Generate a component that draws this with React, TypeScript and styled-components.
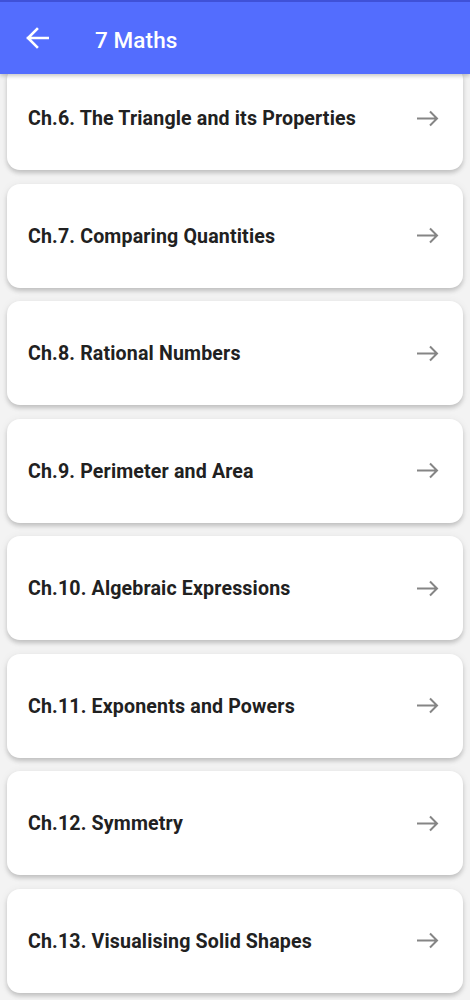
import React from 'react';
import styled, { createGlobalStyle } from 'styled-components';

const GlobalStyle = createGlobalStyle`
    html, body {
        margin: 0;
        padding: 0;
        background: #f3f3f3;
        font-family: Roboto, 'Liberation Sans', sans-serif;
    }
`;

const Page = styled.div`
    width: 470px;
    height: 1000px;
    display: flex;
    flex-direction: column;
    overflow: hidden;
    background: #f3f3f3;
`;

const Header = styled.header`
    position: relative;
    z-index: 2;
    flex: 0 0 74px;
    display: flex;
    align-items: center;
    gap: 45px;
    padding: 0 0 0 24px;
    background: #536dfe;
    border-top: 2px solid #3f51d8;
    box-sizing: border-box;
    box-shadow: 0 2px 4px rgba(0, 0, 0, 0.22);
`;

const BackButton = styled.button`
    display: flex;
    align-items: center;
    justify-content: center;
    width: 26px;
    height: 26px;
    padding: 0;
    border: 0;
    background: none;
    color: #ffffff;
`;

const Title = styled.h1`
    margin: 0;
    padding-top: 4px;
    font-size: 22.5px;
    font-weight: 500;
    color: #ffffff;
    letter-spacing: 0.1px;
`;

const List = styled.div`
    flex: 1;
    display: flex;
    flex-direction: column;
    gap: 13.5px;
    padding: 0 7px;
    margin-top: -8px;
`;

const Card = styled.div`
    flex: 0 0 104px;
    display: flex;
    align-items: center;
    justify-content: space-between;
    padding: 0 24px 0 21px;
    background: #ffffff;
    border-radius: 13px;
    box-shadow: 0 3px 4px rgba(0, 0, 0, 0.18), 0 1px 10px rgba(0, 0, 0, 0.06);
`;

const ChapterName = styled.span`
    padding-top: 1px;
    font-size: 19.6px;
    font-weight: 700;
    letter-spacing: 0.15px;
    color: #212121;
`;

const ArrowIcon = styled.svg`
    flex: 0 0 auto;
    color: #858585;
`;

const chapters = [
    'Ch.6. The Triangle and its Properties',
    'Ch.7. Comparing Quantities',
    'Ch.8. Rational Numbers',
    'Ch.9. Perimeter and Area',
    'Ch.10. Algebraic Expressions',
    'Ch.11. Exponents and Powers',
    'Ch.12. Symmetry',
    'Ch.13. Visualising Solid Shapes',
];

const BackArrow = () => (
    <svg width='24' height='22' viewBox='0 0 24 22' fill='none'>
        <path d='M23 11H3M12 2L3 11l9 9' stroke='currentColor' strokeWidth='2.6' strokeLinecap='square' />
    </svg>
);

const ForwardArrow = () => (
    <ArrowIcon width='23' height='17' viewBox='0 0 23 17' fill='none'>
        <path d='M1 8.5h20M14 1.5l7 7-7 7' stroke='currentColor' strokeWidth='2' />
    </ArrowIcon>
);

export default function App() {
    return (
        <Page>
            <GlobalStyle />
            <Header>
                <BackButton aria-label='Back'>
                    <BackArrow />
                </BackButton>
                <Title>7 Maths</Title>
            </Header>
            <List>
                { chapters.map(name => (
                    <Card key={ name }>
                        <ChapterName>{ name }</ChapterName>
                        <ForwardArrow />
                    </Card>
                )) }
            </List>
        </Page>
    );
}
